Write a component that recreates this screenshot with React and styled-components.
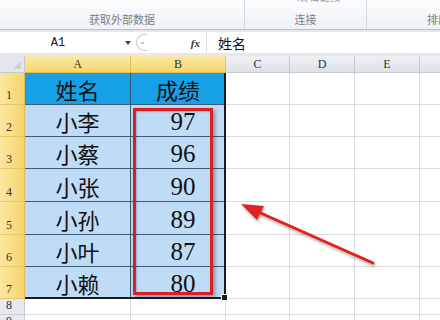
import React from 'react';
import styled, { createGlobalStyle } from 'styled-components';

const GlobalStyle = createGlobalStyle`
  html, body {
    margin: 0;
    padding: 0;
    width: 440px;
    height: 320px;
    overflow: hidden;
    background: #ffffff;
    font-family: "Liberation Sans", "Noto Sans CJK SC", sans-serif;
  }
`;

const columns = [
  { key: 'A', width: 106, active: true },
  { key: 'B', width: 95, active: true },
  { key: 'C', width: 64 },
  { key: 'D', width: 65 },
  { key: 'E', width: 65 },
  { key: 'F', width: 40 },
];

const data = [
  ['姓名', '成绩'],
  ['小李', '97'],
  ['小蔡', '96'],
  ['小张', '90'],
  ['小孙', '89'],
  ['小叶', '87'],
  ['小赖', '80'],
];

const rowHeights = [32, 32, 32, 33, 33, 32, 32, 16, 16];

const App = () => {
  return (
    <>
      <GlobalStyle />
      <Window>
        <Ribbon>
          <Group $width={245}>
            <GroupLabel>获取外部数据</GroupLabel>
          </Group>
          <Group $width={122}>
            <HiddenCommand>编辑链接</HiddenCommand>
            <GroupLabel>连接</GroupLabel>
          </Group>
          <Group $width={73} $last>
            <GroupLabel $align="left">排序</GroupLabel>
          </Group>
        </Ribbon>

        <FormulaBar>
          <NameBox>
            <span>A1</span>
            <Caret />
          </NameBox>
          <Splitter>
            <Dots />
          </Splitter>
          <FxButton>fx</FxButton>
          <FormulaInput>姓名</FormulaInput>
        </FormulaBar>

        <Sheet>
          <Grid>
            <Corner>
              <CornerTriangle />
            </Corner>
            {columns.map((c) => (
              <ColHeader key={c.key} $active={c.active}>
                {c.key === 'F' ? '' : c.key}
              </ColHeader>
            ))}

            {rowHeights.map((h, r) => {
              const row = data[r];
              return (
                <React.Fragment key={r}>
                  <RowHeader $h={h} $active={!!row}>
                    {r + 1}
                  </RowHeader>
                  {columns.map((c, ci) => {
                    const value = row && ci < 2 ? row[ci] : '';
                    const kind = !row || ci > 1 ? 'empty' : r === 0 ? 'head' : 'data';
                    return (
                      <Cell key={c.key} $h={h} $kind={kind} $num={ci === 1 && r > 0}>
                        {value}
                      </Cell>
                    );
                  })}
                </React.Fragment>
              );
            })}
          </Grid>

          <Selection>
            <FillHandle />
          </Selection>
          <RedBox />
          <Arrow viewBox="0 0 440 267" width="440" height="267">
            <defs>
              <filter id="soft" x="-10%" y="-10%" width="120%" height="120%">
                <feGaussianBlur in="SourceAlpha" stdDeviation="1.5" />
                <feOffset dx="1" dy="2" />
                <feComponentTransfer>
                  <feFuncA type="linear" slope="0.35" />
                </feComponentTransfer>
                <feMerge>
                  <feMergeNode />
                  <feMergeNode in="SourceGraphic" />
                </feMerge>
              </filter>
            </defs>
            <g filter="url(#soft)">
              <line x1="373" y1="207" x2="256" y2="155" stroke="#e0201c" strokeWidth="3" strokeLinecap="round" />
              <polygon points="241,148 264,150 257,164" fill="#e0201c" />
            </g>
          </Arrow>
        </Sheet>
      </Window>
    </>
  );
};

export default App;

const Window = styled.div`
  width: 440px;
  height: 320px;
  display: flex;
  flex-direction: column;
  overflow: hidden;
`;

const Ribbon = styled.div`
  height: 29px;
  display: flex;
  background: linear-gradient(#fbfcfd, #eef1f5);
  border-bottom: 1px solid #b9c0c9;
  flex-shrink: 0;
  overflow: hidden;
`;

const Group = styled.div`
  width: ${(p) => p.$width}px;
  flex-shrink: 0;
  position: relative;
  display: flex;
  flex-direction: column;
  justify-content: flex-end;
  border-right: ${(p) => (p.$last ? 'none' : '1px solid #d3d8de')};
  box-sizing: border-box;
  padding-bottom: 3px;
  overflow: hidden;
`;

const GroupLabel = styled.div`
  font-family: "Noto Sans CJK SC", sans-serif;
  font-size: 11px;
  line-height: 14px;
  color: #7a7f86;
  text-align: ${(p) => p.$align || 'center'};
  padding-left: ${(p) => (p.$align === 'left' ? '60px' : '0')};
  white-space: nowrap;
`;

const HiddenCommand = styled.div`
  position: absolute;
  top: -12px;
  left: 52px;
  font-family: "Noto Sans CJK SC", sans-serif;
  font-size: 11px;
  color: #9aa0a8;
`;

const FormulaBar = styled.div`
  height: 21px;
  display: flex;
  align-items: stretch;
  background: #ffffff;
  border-top: 2px solid #e3e6ea;
  border-bottom: 3px solid #e6e8eb;
  flex-shrink: 0;
`;

const NameBox = styled.div`
  width: 136px;
  flex-shrink: 0;
  position: relative;
  display: flex;
  align-items: center;
  justify-content: center;
  font-family: "Liberation Mono", monospace;
  font-size: 12px;
  color: #222;
  span {
    margin-right: 20px;
  }
`;

const Caret = styled.div`
  position: absolute;
  right: 5px;
  top: 9px;
  width: 0;
  height: 0;
  border-left: 3px solid transparent;
  border-right: 3px solid transparent;
  border-top: 4px solid #444;
`;

const Splitter = styled.div`
  width: 10px;
  margin: 2px 0;
  border: 1px solid #c8ccd2;
  border-right: none;
  border-radius: 10px 0 0 10px;
  display: flex;
  align-items: center;
  justify-content: center;
  flex-shrink: 0;
`;

const Dots = styled.div`
  width: 3px;
  height: 2px;
  background: #c5cad0;
`;

const FxButton = styled.div`
  width: 60px;
  flex-shrink: 0;
  display: flex;
  align-items: center;
  justify-content: flex-end;
  padding-right: 6px;
  box-sizing: border-box;
  border-right: 1px solid #d9dce0;
  font-family: "Liberation Serif", serif;
  font-style: italic;
  font-weight: bold;
  font-size: 11px;
  color: #333;
`;

const FormulaInput = styled.div`
  flex: 1;
  display: flex;
  align-items: center;
  padding-left: 11px;
  font-family: "Noto Sans CJK SC", sans-serif;
  font-size: 14px;
  color: #111;
`;

const Sheet = styled.div`
  position: relative;
  flex: 1;
  overflow: hidden;
`;

const Grid = styled.div`
  display: grid;
  grid-template-columns: 25px ${columns.map((c) => `${c.width}px`).join(' ')};
  grid-auto-rows: auto;
`;

const Corner = styled.div`
  height: 17px;
  box-sizing: border-box;
  background: #e3e6ea;
  border-right: 1px solid #c4c9cf;
  border-bottom: 1px solid #c4c9cf;
  position: relative;
`;

const CornerTriangle = styled.div`
  position: absolute;
  right: 3px;
  bottom: 3px;
  width: 0;
  height: 0;
  border-left: 8px solid transparent;
  border-bottom: 8px solid #cdd1d6;
`;

const ColHeader = styled.div`
  height: 17px;
  box-sizing: border-box;
  display: flex;
  align-items: center;
  justify-content: center;
  font-family: "Liberation Serif", serif;
  font-size: 12px;
  color: #333;
  background: ${(p) =>
    p.$active ? 'linear-gradient(#fce9a6, #f7d66b)' : 'linear-gradient(#eef0f3, #dde1e6)'};
  border-right: 1px solid ${(p) => (p.$active ? '#e3c05d' : '#c4c9cf')};
  border-bottom: 1px solid ${(p) => (p.$active ? '#e7b93f' : '#c4c9cf')};
`;

const RowHeader = styled.div`
  height: ${(p) => p.$h}px;
  box-sizing: border-box;
  display: flex;
  align-items: flex-end;
  padding: 0 0 1px 6px;
  font-family: "Liberation Serif", serif;
  font-size: 12px;
  color: #333;
  background: ${(p) => (p.$active ? 'linear-gradient(90deg, #fbe6a0, #f7d56d)' : '#e6e9ed')};
  border-right: 1px solid ${(p) => (p.$active ? '#e2b94b' : '#c4c9cf')};
  border-bottom: 1px solid ${(p) => (p.$active ? '#e6c76c' : '#c9cdd2')};
`;

const cellBg = {
  head: '#16a1e6',
  data: '#bedcf6',
  empty: '#ffffff',
};

const Cell = styled.div`
  height: ${(p) => p.$h}px;
  box-sizing: border-box;
  display: flex;
  align-items: flex-end;
  justify-content: center;
  overflow: hidden;
  background: ${(p) => cellBg[p.$kind]};
  border-right: 1px solid ${(p) => (p.$kind === 'empty' ? '#dadcdf' : '#3e5a78')};
  border-bottom: 1px solid ${(p) => (p.$kind === 'empty' ? '#dadcdf' : '#3e5a78')};
  font-family: ${(p) =>
    p.$num ? '"Liberation Serif", serif' : '"Noto Sans CJK SC", sans-serif'};
  font-size: ${(p) => (p.$num ? '25px' : '22px')};
  line-height: ${(p) => (p.$num ? '28px' : '30px')};
  color: #111;
  padding-left: ${(p) => (p.$num ? '10px' : '0')};
`;

const Selection = styled.div`
  position: absolute;
  left: 25px;
  top: 17px;
  width: 201px;
  height: 226px;
  box-sizing: border-box;
  border-right: 2px solid #1c1c1c;
  border-bottom: 2px solid #1c1c1c;
  pointer-events: none;
`;

const FillHandle = styled.div`
  position: absolute;
  right: -4px;
  bottom: -4px;
  width: 5px;
  height: 5px;
  background: #1c1c1c;
  border: 1px solid #ffffff;
`;

const RedBox = styled.div`
  position: absolute;
  left: 133px;
  top: 52px;
  width: 80px;
  height: 187px;
  box-sizing: border-box;
  border: 3px solid #dc1f22;
  box-shadow: 2px 2px 4px rgba(0, 0, 0, 0.35), inset 1px 1px 2px rgba(0, 0, 0, 0.2);
  pointer-events: none;
`;

const Arrow = styled.svg`
  position: absolute;
  left: 0;
  top: 0;
  pointer-events: none;
`;
